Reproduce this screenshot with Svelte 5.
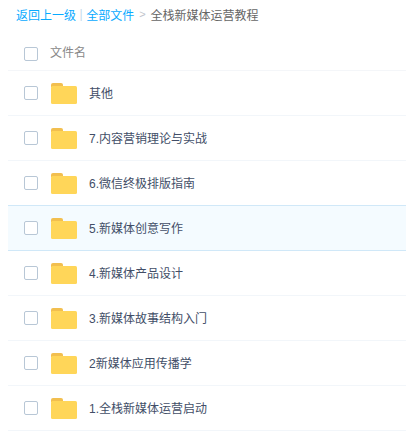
<script>
  const rows = ['其他','7.内容营销理论与实战','6.微信终极排版指南','5.新媒体创意写作','4.新媒体产品设计','3.新媒体故事结构入门','2新媒体应用传播学','1.全栈新媒体运营启动'];
</script>

<div class="page">
  <div class="crumbs">
    <span class="link">返回上一级</span>
    <span class="bar">|</span>
    <span class="link">全部文件</span>
    <span class="sep">&gt;</span>
    <span class="cur">全栈新媒体运营教程</span>
  </div>
  <div class="head">
    <span class="check"></span>
    <span class="headname">文件名</span>
  </div>
  {#each rows as name, i}
    <div class="row" class:hover={i === 3}>
      <span class="check"></span>
      <svg class="folder" width="26" height="21" viewBox="0 0 26 21">
        <path d="M0 2a2 2 0 0 1 2-2h8a2 2 0 0 1 2 2v2H0z" fill="#f2bf4f"/>
        <rect x="0" y="3" width="26" height="18" rx="1.5" fill="#ffd659"/>
      </svg>
      <span class="name">{name}</span>
    </div>
  {/each}
</div>

<style>
  :global(body) { margin: 0; background: #fff; }
  .page {
    width: 406px;
    height: 446px;
    padding-left: 8px;
    box-sizing: border-box;
    overflow: hidden;
    font-family: "Liberation Sans", "Noto Sans CJK SC", sans-serif;
    font-size: 12px;
  }
  .crumbs {
    height: 30px;
    margin-bottom: 7px;
    padding-left: 8px;
    padding-bottom: 2px;
    box-sizing: border-box;
    display: flex;
    align-items: center;
    color: #666;
    white-space: nowrap;
  }
  .link { color: #09aaff; }
  .bar { color: #c5d9ea; margin: 0 3.5px; }
  .sep { color: #c0c4cc; margin: 0 5px; font-size: 11px; }
  .cur { color: #666; }
  .head {
    height: 34px;
    display: flex;
    align-items: center;
    padding-left: 16px;
    border-bottom: 1px solid #f4f6f9;
    box-sizing: border-box;
  }
  .headname { margin-left: 12px; color: #888; padding-bottom: 4px; }
  .row {
    height: 45px;
    display: flex;
    align-items: center;
    padding-left: 16px;
    border-bottom: 1px solid #f2f6fa;
    box-sizing: border-box;
  }
  .row.hover {
    background: #f4fbff;
    border-bottom-color: #d0e8f8;
    box-shadow: 0 -1px 0 #d0e8f8;
  }
  .check {
    width: 14px;
    height: 14px;
    border: 1px solid #b8c7d6;
    border-radius: 2px;
    background: #fff;
    box-sizing: border-box;
    flex: none;
  }
  .folder { margin-left: 13px; flex: none; }
  .name { margin-left: 12px; color: #424e67; padding-bottom: 2px; }
</style>
